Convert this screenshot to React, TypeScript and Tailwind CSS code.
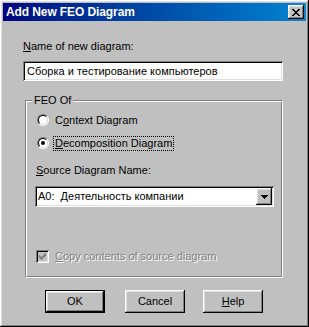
import React from 'react';

const sunken =
  'shadow-[inset_1px_1px_0_#808080,inset_-1px_-1px_0_#ffffff,inset_2px_2px_0_#000000,inset_-2px_-2px_0_#dfdfdf]';
const raised =
  'shadow-[inset_-1px_-1px_0_#000000,inset_1px_1px_0_#ffffff,inset_-2px_-2px_0_#808080,inset_2px_2px_0_#dfdfdf]';

const Radio: React.FC<{ checked?: boolean }> = ({ checked }) => (
  <div className="w-[12px] h-[12px] rounded-full border border-t-[#808080] border-l-[#808080] border-b-white border-r-white">
    <div className="w-full h-full rounded-full bg-white border border-t-black border-l-black border-b-[#dfdfdf] border-r-[#dfdfdf] flex items-center justify-center">
      {checked && <div className="w-[4px] h-[4px] rounded-full bg-black" />}
    </div>
  </div>
);

const Btn: React.FC<{ children: React.ReactNode; isDefault?: boolean; className?: string }> = ({
  children,
  isDefault,
  className,
}) => (
  <div
    className={`w-[60px] h-[23px] bg-[#c0c0c0] flex items-center justify-center text-black ${
      isDefault ? 'border border-black' : ''
    } ${className ?? ''}`}
  >
    <div className={`w-full h-full flex items-center justify-center ${raised}`}>{children}</div>
  </div>
);

export default function App() {
  return (
    <div
      className={`w-[309px] h-[327px] bg-[#c0c0c0] p-[3px] flex flex-col text-[11px] leading-[13px] text-black ${raised}`}
      style={{ fontFamily: '"Liberation Sans", Arial, sans-serif' }}
    >
      {/* Title bar */}
      <div className="h-[18px] flex items-center justify-between bg-gradient-to-r from-[#000080] to-[#1084d0] pl-[3px] pr-[2px]">
        <span className="text-white font-bold text-[12px] tracking-[-0.1px]">Add New FEO Diagram</span>
        <div className={`w-[16px] h-[14px] bg-[#c0c0c0] flex items-center justify-center ${raised}`}>
          <svg width="8" height="7" viewBox="0 0 8 7" shapeRendering="crispEdges">
            <path
              d="M0 0h2v1H0zM6 0h2v1H6zM1 1h2v1H1zM5 1h2v1H5zM2 2h4v1H2zM3 3h2v1H3zM2 4h4v1H2zM1 5h2v1H1zM5 5h2v1H5zM0 6h2v1H0zM6 6h2v1H6z"
              fill="#000"
            />
          </svg>
        </div>
      </div>

      {/* Body */}
      <div className="flex flex-col">
        <div className="mt-[19px] ml-[20px]">
          <span className="underline underline-offset-1">N</span>ame of new diagram:
        </div>

        <div className={`mt-[8px] ml-[20px] w-[260px] h-[20px] bg-white flex items-center pl-[4px] ${sunken}`}>
          Сборка и тестирование компьютеров
        </div>

        {/* Group box */}
        <div className="relative mt-[19px] ml-[22px] w-[258px] h-[178px] border border-t-[#808080] border-l-[#808080] border-b-white border-r-white">
          <div className="w-full h-full border border-t-white border-l-white border-b-[#808080] border-r-[#808080] flex flex-col">
            <span className="absolute -top-[7px] left-[6px] bg-[#c0c0c0] px-[2px]">FEO Of</span>

            <div className="mt-[10px] ml-[10px] h-[16px] flex items-center gap-[5px]">
              <Radio />
              <span className="px-[1px]">
                C<span className="underline underline-offset-1">o</span>ntext Diagram
              </span>
            </div>

            <div className="mt-[7px] ml-[10px] h-[16px] flex items-center gap-[4px]">
              <Radio checked />
              <span className="border border-dotted border-black px-[1px] leading-[13px]">
                <span className="underline underline-offset-1">D</span>ecomposition Diagram
              </span>
            </div>

            <div className="mt-[13px] ml-[9px]">
              <span className="underline underline-offset-1">S</span>ource Diagram Name:
            </div>

            <div className={`mt-[9px] ml-[8px] w-[239px] h-[21px] bg-white flex items-center justify-between p-[2px] ${sunken}`}>
              <span className="pl-[1px]">A0:&nbsp;&nbsp;Деятельность компании</span>
              <div className={`w-[16px] h-[17px] bg-[#c0c0c0] flex items-center justify-center ${raised}`}>
                <svg width="7" height="4" viewBox="0 0 7 4" shapeRendering="crispEdges">
                  <path d="M0 0h7v1H0zM1 1h5v1H1zM2 2h3v1H2zM3 3h1v1H3z" fill="#000" />
                </svg>
              </div>
            </div>

            <div className="mt-[43px] ml-[9px] h-[13px] flex items-center gap-[6px]">
              <div className={`w-[13px] h-[13px] bg-[#c0c0c0] flex items-center justify-center ${sunken}`}>
                <svg width="7" height="7" viewBox="0 0 7 7" shapeRendering="crispEdges">
                  <path d="M6 0h1v3H6zM5 1h1v3H5zM4 2h1v3H4zM3 3h1v3H3zM2 4h1v3H2zM1 3h1v3H1zM0 2h1v3H0z" fill="#808080" />
                </svg>
              </div>
              <span className="text-[#808080] [text-shadow:1px_1px_0_#ffffff]">
                <span className="underline underline-offset-1">C</span>opy contents of source diagram
              </span>
            </div>
          </div>
        </div>

        {/* Buttons */}
        <div className="mt-[12px] flex items-center">
          <Btn isDefault className="ml-[42px]">
            OK
          </Btn>
          <Btn className="ml-[20px]">Cancel</Btn>
          <Btn className="ml-[18px]">
            <span className="underline underline-offset-1">H</span>elp
          </Btn>
        </div>
      </div>
    </div>
  );
}
